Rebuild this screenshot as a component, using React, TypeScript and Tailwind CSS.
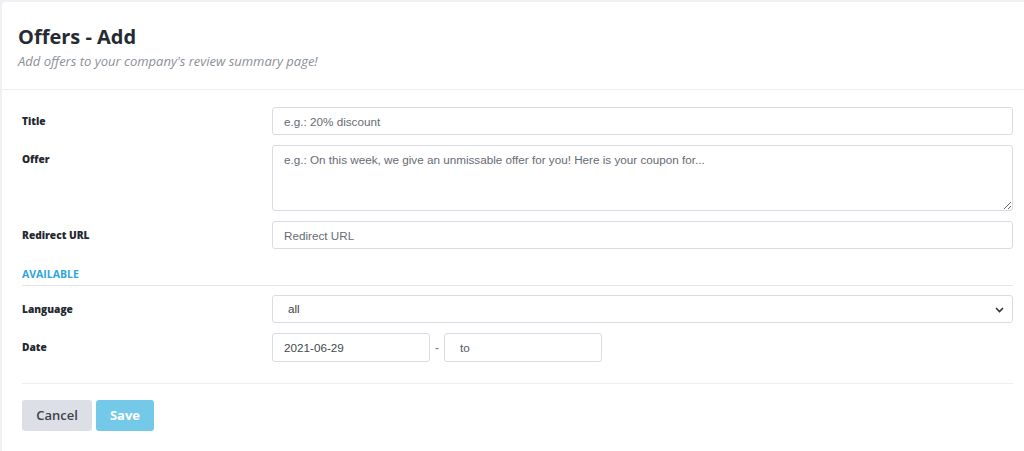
import React from "react";

const labelCls =
  "w-[250px] shrink-0 pt-[7px] text-[10.2px] font-extrabold text-[#23272e] leading-[14px]";
const inputCls =
  "h-[28px] w-full rounded-[3px] border border-[#d9dce3] bg-white px-[11px] text-[11.7px] text-[#555a61] placeholder:text-[#666b72] outline-none";
const arial = { fontFamily: "'Liberation Sans', Arial, sans-serif" };

export default function App() {
  return (
    <div className="min-h-[451px] bg-[#eff0f4] pl-[2px] pt-[2px]" style={arial}>
      <div className="min-h-[449px] rounded-tl-[4px] bg-white">
        <div className="px-[16px] pb-[19px] pt-[22px] border-b border-[#eceef2]">
          <h1 className="text-[20px] font-bold leading-[26px] text-[#262b33]" style={{ fontFamily: "'Open Sans', sans-serif" }}>
            Offers - Add
          </h1>
          <p className="mt-[2px] text-[13px] italic leading-[18px] text-[#8b9098]" style={{ fontFamily: "'Open Sans', sans-serif" }}>
            Add offers to your company's review summary page!
          </p>
        </div>

        <div className="pl-[20px] pr-[11px] pt-[17px]" style={{ fontFamily: "'Open Sans', sans-serif" }}>
          <div className="flex flex-col gap-[10px]">
            <div className="flex">
              <div className={labelCls}>Title</div>
              <input className={inputCls} style={arial} placeholder="e.g.: 20% discount" />
            </div>
            <div className="flex">
              <div className={labelCls}>Offer</div>
              <textarea
                className="h-[66px] w-full rounded-[3px] border border-[#d9dce3] bg-white px-[11px] py-[5px] text-[11.7px] text-[#555a61] placeholder:text-[#666b72] outline-none"
                style={arial}
                placeholder="e.g.: On this week, we give an unmissable offer for you! Here is your coupon for..."
              />
            </div>
            <div className="flex">
              <div className={labelCls}>Redirect URL</div>
              <input className={inputCls} style={arial} placeholder="Redirect URL" />
            </div>
          </div>

          <div className="mt-[19px] border-b border-[#e3e5ea] pb-[4px] text-[10.5px] font-bold leading-[13px] text-[#2ea6dc]">
            AVAILABLE
          </div>

          <div className="mt-[9px] flex flex-col gap-[10px]">
            <div className="flex">
              <div className={labelCls}>Language</div>
              <div className="relative w-full">
                <div className="flex h-[28px] w-full items-center rounded-[3px] border border-[#d9dce3] bg-white pl-[15px] pr-[8px] text-[11.7px] text-[#3f444b]" style={arial}>
                  <span className="flex-1">all</span>
                  <svg width="9" height="6" viewBox="0 0 9 6" className="mt-[1px]">
                    <path d="M1 1 L4.5 4.5 L8 1" fill="none" stroke="#333" strokeWidth="1.6" />
                  </svg>
                </div>
              </div>
            </div>
            <div className="flex">
              <div className={labelCls}>Date</div>
              <div className="flex items-center">
                <div className="flex h-[29px] w-[158px] items-center rounded-[3px] border border-[#d9dce3] bg-white px-[11px] text-[11.7px] text-[#444950]" style={arial}>
                  2021-06-29
                </div>
                <span className="w-[14px] text-center text-[12px] text-[#777]" style={arial}>-</span>
                <div className="flex h-[29px] w-[158px] items-center rounded-[3px] border border-[#d9dce3] bg-white px-[15px] text-[11.7px] text-[#555a61]" style={arial}>
                  to
                </div>
              </div>
            </div>
          </div>

          <div className="mt-[21px] border-t border-[#eceef2]" />

          <div className="mt-[16px] flex gap-[4px]">
            <button className="h-[31px] w-[70px] rounded-[3px] bg-[#dcdfe6] text-[13px] font-semibold text-[#3d414a]">
              Cancel
            </button>
            <button className="h-[31px] w-[58px] rounded-[3px] bg-[#75c9e8] text-[13px] font-bold text-white">
              Save
            </button>
          </div>
        </div>
      </div>
    </div>
  );
}
